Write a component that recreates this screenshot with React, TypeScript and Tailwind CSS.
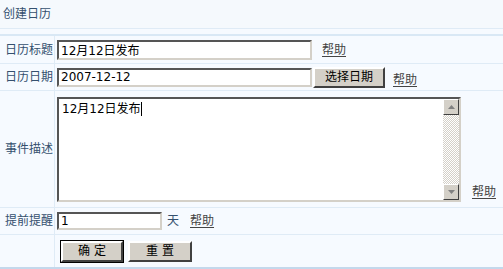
import React from 'react';

const cjk = '"DejaVu Sans", "Noto Sans CJK SC", sans-serif';

// classic win2k inset field
const inset =
  'bg-white border-2 border-t-[#555] border-l-[#555] border-b-[#d4d0c8] border-r-[#d4d0c8] text-black text-[12px] leading-none px-[2px] outline-none';

function Help({ className = '' }: { className?: string }) {
  return (
    <a href="#" className={`text-[12px] text-[#444] underline underline-offset-2 ${className}`}>
      帮助
    </a>
  );
}

function Btn({ label, primary = false, className = '' }: { label: string; primary?: boolean; className?: string }) {
  return (
    <button
      className={`h-[21px] bg-[#d4d0c8] text-black text-[12px] leading-none border-2 border-t-white border-l-white border-b-[#404040] border-r-[#404040] ${
        primary ? 'outline outline-1 outline-black -outline-offset-0' : ''
      } ${className}`}
    >
      {label}
    </button>
  );
}

function Row({ label, children, className = '' }: { label?: string; children: React.ReactNode; className?: string }) {
  return (
    <div className={`flex border-b border-[#dfebf6] ${className}`}>
      <div className="w-[55px] shrink-0 border-r border-[#dfebf6] flex items-center pl-[5px] text-[12px] text-[#34506e]">
        {label}
      </div>
      <div className="flex-1 flex items-center pl-[2px]">{children}</div>
    </div>
  );
}

export default function App() {
  return (
    <div className="w-[503px] h-[269px] bg-[#f6faff] overflow-hidden" style={{ fontFamily: cjk }}>
      <div className="h-[29px] flex items-center pl-[3px] text-[12px] text-[#34506e] border-b border-[#dfebf6] bg-[#f5f9fd]">
        创建日历
      </div>
      <div className="h-[5px]" />
      <div className="border-t-2 border-[#d9e8f5] border-b-[3px] border-b-[#c4d8ec]">
        <Row label="日历标题" className="h-[28px]">
          <input className={`${inset} w-[255px] h-[20px]`} defaultValue="12月12日发布" />
          <Help className="ml-[10px]" />
        </Row>
        <Row label="日历日期" className="h-[27px]">
          <input className={`${inset} w-[255px] h-[19px]`} defaultValue="2007-12-12" />
          <Btn label="选择日期" className="w-[72px] ml-[1px]" />
          <Help className="ml-[8px] mt-[6px]" />
        </Row>
        <Row label="事件描述" className="h-[117px]">
          <div className="w-[404px] h-[105px] flex bg-white border-2 border-t-[#555] border-l-[#555] border-b-[#d4d0c8] border-r-[#d4d0c8]">
            <div className="flex-1 px-[3px] pt-[3px] text-[12px] text-black leading-[14px] flex items-start">
              <span>12月12日发布</span>
              <span className="inline-block w-px h-[14px] bg-black" />
            </div>
            <div className="w-[16px] flex flex-col">
              <div className="h-[16px] bg-[#d4d0c8] border border-t-white border-l-white border-b-[#404040] border-r-[#404040] flex items-center justify-center">
                <svg width="7" height="4" viewBox="0 0 7 4"><path d="M3.5 0L7 4H0z" fill="#808080" /></svg>
              </div>
              <div className="flex-1 bg-[repeating-conic-gradient(#d4d0c8_0_25%,#ffffff_0_50%)] bg-[length:2px_2px]" />
              <div className="h-[16px] bg-[#d4d0c8] border border-t-white border-l-white border-b-[#404040] border-r-[#404040] flex items-center justify-center">
                <svg width="7" height="4" viewBox="0 0 7 4"><path d="M0 0H7L3.5 4z" fill="#808080" /></svg>
              </div>
            </div>
          </div>
          <Help className="ml-[11px] self-end mb-[6px]" />
        </Row>
        <Row label="提前提醒" className="h-[27px]">
          <input className={`${inset} w-[105px] h-[18px]`} defaultValue="1" />
          <span className="ml-[5px] text-[12px] text-[#34506e]">天</span>
          <Help className="ml-[11px]" />
        </Row>
        <Row className="h-[32px] border-b-0">
          <Btn label="确 定" primary className="w-[62px] ml-[4px]" />
          <Btn label="重 置" className="w-[64px] ml-[5px]" />
        </Row>
      </div>
    </div>
  );
}
